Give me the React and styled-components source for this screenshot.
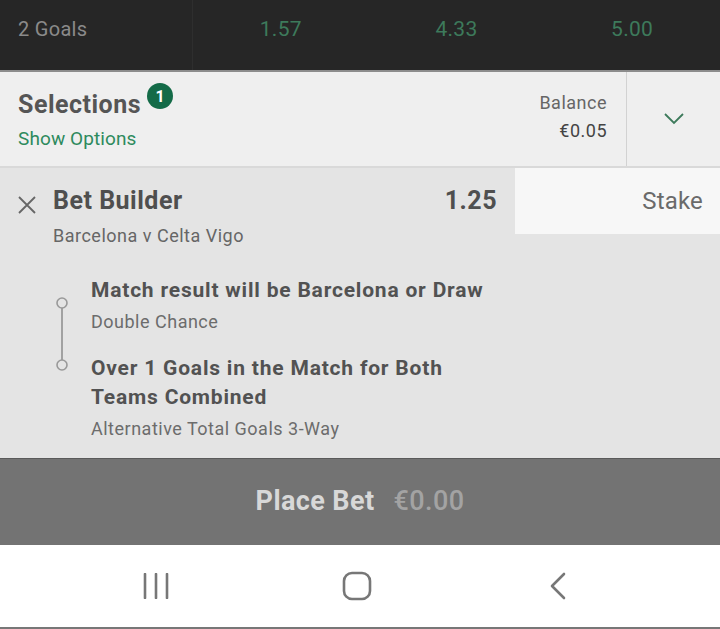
import React from 'react';
import styled, { createGlobalStyle } from 'styled-components';

const GlobalStyle = createGlobalStyle`
  html, body {
    margin: 0;
    padding: 0;
    background: #ffffff;
    font-family: Roboto, "Liberation Sans", sans-serif;
  }
`;

const Screen = styled.div`
  width: 720px;
  height: 629px;
  display: flex;
  flex-direction: column;
  overflow: hidden;
`;

const MarketRow = styled.div`
  height: 70px;
  flex-shrink: 0;
  background: #262626;
  display: grid;
  grid-template-columns: 193px 1fr 1fr 1fr;
  align-items: stretch;
  border-bottom: 2px solid #8c8c8c;
`;

const MarketName = styled.div`
  display: flex;
  align-items: center;
  padding: 0 0 12px 18px;
  font-size: 20px;
  letter-spacing: 0.3px;
  color: #8a8a8a;
  border-right: 1px solid #2e2e2e;
`;

const Odd = styled.div`
  display: flex;
  align-items: center;
  justify-content: center;
  padding-bottom: 12px;
  font-size: 21px;
  letter-spacing: 0.3px;
  color: #3d7a5b;
`;

const Header = styled.div`
  height: 94px;
  flex-shrink: 0;
  background: #efefef;
  display: flex;
  border-bottom: 2px solid #d9d9d9;
`;

const HeaderLeft = styled.div`
  flex: 1;
  padding: 17px 0 0 18px;
`;

const TitleLine = styled.div`
  display: flex;
  align-items: flex-start;
`;

const Title = styled.div`
  font-size: 25px;
  font-weight: 700;
  letter-spacing: 0.5px;
  color: #555555;
  line-height: 32px;
`;

const Badge = styled.div`
  width: 26px;
  height: 26px;
  border-radius: 50%;
  background: #146b48;
  color: #ffffff;
  font-size: 16px;
  font-weight: 700;
  display: flex;
  align-items: center;
  justify-content: center;
  margin: -6px 0 0 6px;
`;

const Link = styled.div`
  font-size: 19px;
  letter-spacing: 0.1px;
  color: #2d8a5d;
  margin-top: 6px;
`;

const Balance = styled.div`
  padding: 17px 19px 0 0;
  text-align: right;
  color: #666666;
  font-size: 18px;
  letter-spacing: 0.5px;
  line-height: 28px;
  border-right: 1px solid #d2d2d2;
`;

const BalanceValue = styled.div`
  color: #444444;
`;

const Toggle = styled.div`
  width: 93px;
  display: flex;
  align-items: center;
  justify-content: center;
`;

const BetArea = styled.div`
  flex: 1;
  background: #e4e4e4;
  display: flex;
  flex-direction: column;
  border-bottom: 1px solid #5a5a5a;
`;

const BetTop = styled.div`
  display: flex;
  align-items: flex-start;
`;

const BetInfo = styled.div`
  flex: 1;
  display: flex;
  padding: 18px 18px 0 18px;
`;

const Close = styled.div`
  width: 35px;
  padding-top: 10px;
`;

const BetText = styled.div`
  flex: 1;
`;

const BetTitleRow = styled.div`
  display: flex;
  justify-content: space-between;
  font-size: 25px;
  font-weight: 700;
  letter-spacing: 0.5px;
  color: #4f4f4f;
  line-height: 30px;
`;

const Fixture = styled.div`
  font-size: 18px;
  letter-spacing: 0.5px;
  color: #666666;
  margin-top: 9px;
`;

const StakeBox = styled.div`
  width: 205px;
  height: 66px;
  background: #f7f7f7;
  display: flex;
  align-items: center;
  justify-content: flex-end;
  padding-right: 17px;
  box-sizing: border-box;
  font-size: 24px;
  letter-spacing: 0.2px;
  color: #6a6a6a;
`;

const Legs = styled.div`
  display: flex;
  padding: 30px 0 0 53px;
`;

const Connector = styled.svg`
  width: 18px;
  flex-shrink: 0;
  margin: 21px 20px 0 0;
`;

const LegList = styled.div`
  display: flex;
  flex-direction: column;
  gap: 22px;
`;

const Leg = styled.div``;

const LegTitle = styled.div`
  font-size: 21px;
  font-weight: 700;
  letter-spacing: 0.8px;
  color: #525252;
  line-height: 29px;
`;

const LegMarket = styled.div`
  font-size: 18px;
  letter-spacing: 0.5px;
  color: #6c6c6c;
  margin-top: 6px;
`;

const PlaceBet = styled.div`
  height: 86px;
  flex-shrink: 0;
  background: #737373;
  display: flex;
  align-items: center;
  justify-content: center;
  gap: 19px;
  font-size: 27px;
  letter-spacing: 0.4px;
  padding-bottom: 2px;
  box-sizing: border-box;
`;

const PlaceLabel = styled.span`
  font-weight: 700;
  color: #d8d8d8;
`;

const PlaceAmount = styled.span`
  font-weight: 500;
  color: #a3a3a3;
`;

const NavBar = styled.div`
  height: 84px;
  flex-shrink: 0;
  box-sizing: border-box;
  background: #ffffff;
  border-bottom: 2px solid #777777;
  display: grid;
  grid-template-columns: 201px 201px 201px;
  align-items: center;
  justify-items: center;
  padding: 0 0 0 55px;
`;

const NavIcon = styled.svg`
  display: block;
`;

export default function App() {
  return (
    <>
      <GlobalStyle />
      <Screen>
        <MarketRow>
          <MarketName>2 Goals</MarketName>
          <Odd>1.57</Odd>
          <Odd>4.33</Odd>
          <Odd>5.00</Odd>
        </MarketRow>

        <Header>
          <HeaderLeft>
            <TitleLine>
              <Title>Selections</Title>
              <Badge>1</Badge>
            </TitleLine>
            <Link>Show Options</Link>
          </HeaderLeft>
          <Balance>
            <div>Balance</div>
            <BalanceValue>€0.05</BalanceValue>
          </Balance>
          <Toggle>
            <svg width="22" height="14" viewBox="0 0 22 14">
              <path d="M2 2 L11 11 L20 2" fill="none" stroke="#3d7a5b" strokeWidth="1.8" />
            </svg>
          </Toggle>
        </Header>

        <BetArea>
          <BetTop>
            <BetInfo>
              <Close>
                <svg width="18" height="18" viewBox="0 0 18 18">
                  <path d="M1 1 L17 17 M17 1 L1 17" stroke="#666" strokeWidth="1.8" />
                </svg>
              </Close>
              <BetText>
                <BetTitleRow>
                  <span>Bet Builder</span>
                  <span>1.25</span>
                </BetTitleRow>
                <Fixture>Barcelona v Celta Vigo</Fixture>
              </BetText>
            </BetInfo>
            <StakeBox>Stake</StakeBox>
          </BetTop>

          <Legs>
            <Connector height="76" viewBox="0 0 18 76">
              <circle cx="9" cy="6" r="5" fill="none" stroke="#999" strokeWidth="1.6" />
              <line x1="9" y1="11" x2="9" y2="63" stroke="#999" strokeWidth="1.8" />
              <circle cx="9" cy="68" r="5" fill="none" stroke="#999" strokeWidth="1.6" />
            </Connector>
            <LegList>
              <Leg>
                <LegTitle>Match result will be Barcelona or Draw</LegTitle>
                <LegMarket>Double Chance</LegMarket>
              </Leg>
              <Leg>
                <LegTitle>
                  Over 1 Goals in the Match for Both
                  <br />
                  Teams Combined
                </LegTitle>
                <LegMarket>Alternative Total Goals 3-Way</LegMarket>
              </Leg>
            </LegList>
          </Legs>
        </BetArea>

        <PlaceBet>
          <PlaceLabel>Place Bet</PlaceLabel>
          <PlaceAmount>€0.00</PlaceAmount>
        </PlaceBet>

        <NavBar>
          <NavIcon width="26" height="26" viewBox="0 0 26 26">
            <path d="M2 1 V25 M13 1 V25 M24 1 V25" stroke="#777" strokeWidth="2.6" strokeLinecap="round" />
          </NavIcon>
          <NavIcon width="30" height="30" viewBox="0 0 30 30">
            <rect x="2" y="2" width="26" height="26" rx="8" fill="none" stroke="#777" strokeWidth="2.6" />
          </NavIcon>
          <NavIcon width="20" height="28" viewBox="0 0 20 28">
            <path d="M16 2 L4 14 L16 26" fill="none" stroke="#777" strokeWidth="2.6" strokeLinecap="round" strokeLinejoin="round" />
          </NavIcon>
        </NavBar>
      </Screen>
    </>
  );
}
